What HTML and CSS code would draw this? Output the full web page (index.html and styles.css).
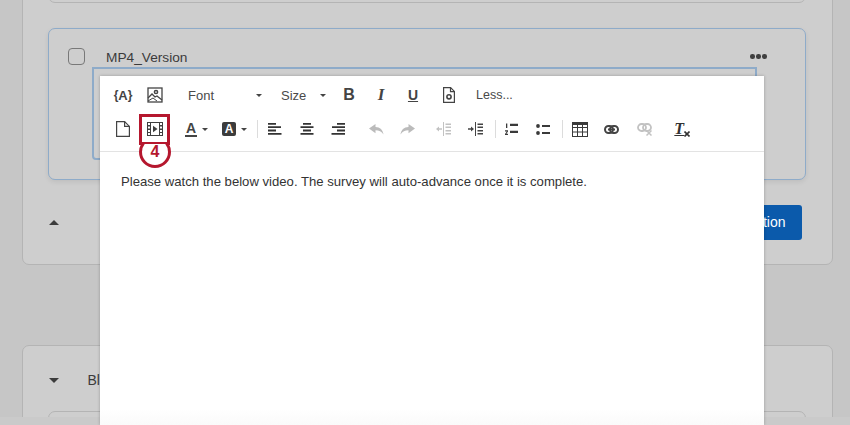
FILE: index.html
```html
<!DOCTYPE html>
<html lang="en">
<head>
<meta charset="utf-8">
<title>Question editor</title>
<link rel="stylesheet" href="styles.css">
</head>
<body>
<main class="page">
  <section class="block block-open">
    <div class="question question-prev"></div>
    <div class="question question-active">
      <div class="q-head">
        <span class="checkbox"></span>
        <span class="q-name">MP4_Version</span>
        <span class="dots"><i></i><i></i><i></i></span>
      </div>
      <div class="q-editbox"></div>
    </div>
    <div class="block-foot">
      <span class="tri tri-up"></span>
      <button class="add-btn">Add Question</button>
    </div>
  </section>
  <section class="block block-next">
    <div class="block-title"><span class="tri tri-down"></span><span class="block-name">Block</span></div>
    <div class="question question-next"></div>
  </section>
</main>
<div class="bottom-strip"></div>

<div class="modal">
  <div class="toolbar">
    <div class="tb-row">
      <span class="tb piped">{<b class="piped-a">A</b>}</span>
      <span class="tb"><svg width="16" height="16" viewBox="0 0 16 16" fill="none" stroke="#444" stroke-width="1.3"><rect x="1" y="1" width="14" height="14"/><circle cx="9" cy="5" r="1.6" stroke-width="1.5"/><path d="M1 11l4-4 3 3 2-1 5 4"/><path d="M1 14l5-3 4 3" stroke-width="1"/></svg></span>
      <span class="drop drop-font"><span class="drop-label">Font</span><span class="caret"></span></span>
      <span class="drop drop-size"><span class="drop-label">Size</span><span class="caret"></span></span>
      <span class="tb tb-text tb-bold">B</span>
      <span class="tb tb-text tb-italic">I</span>
      <span class="tb tb-text tb-under">U</span>
      <span class="tb tb-gap"><svg width="12" height="16" viewBox="0 0 12 16" fill="none" stroke="#444" stroke-width="1.2"><path d="M.6.6h7l3.8 3.8v11H.6z"/><path d="M7.5.6v4h3.9"/><circle cx="6" cy="9.8" r="2.1" stroke-width="1.6"/></svg></span>
      <span class="less">Less...</span>
    </div>
    <div class="tb-row tb-row-dense">
      <span class="tb"><svg width="14" height="16" viewBox="0 0 14 16" fill="none" stroke="#444" stroke-width="1.2"><path d="M.6.6h8l4.800 4.800v10H.6z"/><path d="M8.600.6v4.800h4.800"/></svg></span>
      <span class="tb"><svg width="16" height="14" viewBox="0 0 16 14"><path fill="#3f3f3f" fill-rule="evenodd" d="M0 0h16v14H0zM1 1v2h2V1zM13 1v2h2V1zM1 4.500v2h2v-2zM13 4.500v2h2v-2zM1 8v2h2V8zM13 8v2h2V8zM1 11v2h2v-2zM13 11v2h2v-2zM4 1v12h8V1z"/><path fill="#3f3f3f" d="M6 3.800L10.500 7 6 10.200z"/></svg></span>
      <span class="color-btn color-fore"><span class="fore-a">A</span><span class="caret"></span></span>
      <span class="color-btn color-back"><span class="back-a">A</span><span class="caret"></span></span>
      <span class="sep sep-a"></span>
      <span class="tb"><svg width="14" height="12" viewBox="0 0 14 12" fill="#333"><path d="M0 0h8v1.800H0zM0 3.300h13v1.800H0zM0 6.600h8v1.800H0zM0 9.900h13.500v1.800H0z"/></svg></span>
      <span class="tb"><svg width="14" height="12" viewBox="0 0 14 12" fill="#333"><path d="M3 0h8v1.800H3zM.5 3.300h13v1.800H.5zM3 6.600h8v1.800H3zM.5 9.900h13v1.800H.5z"/></svg></span>
      <span class="tb"><svg width="14" height="12" viewBox="0 0 14 12" fill="#333"><path d="M6 0h8v1.800H6zM1 3.300h13v1.800H1zM6 6.600h8v1.800H6zM.5 9.900h13.500v1.800H.5z"/></svg></span>
      <span class="tb tb-undo"><svg width="15" height="11" viewBox="0 0 15 11" fill="#bbb"><path d="M6.500 0L0 4.600l6.500 4.600V6.200c3.600 0 6 1 8 4.300C14 6 11 3 6.500 3z"/></svg></span>
      <span class="tb"><svg width="15" height="11" viewBox="0 0 15 11" fill="#bbb"><path d="M8.500 0L15 4.600l-6.500 4.600V6.200c-3.600 0-6 1-8 4.300C1 6 4 3 8.500 3z"/></svg></span>
      <span class="tb tb-out"><svg width="15" height="14" viewBox="0 0 15 14" fill="#c2c2c2"><path d="M7 0h1v14H7zM9.500 1.500H15V3H9.500zM9.500 4.500H15V6H9.500zM9.500 8H15v1.500H9.500zM9.500 11H15v1.500H9.500zM6 6.300H3V4.500L0 7l3 2.500V7.700h3z"/></svg></span>
      <span class="tb"><svg width="15" height="14" viewBox="0 0 15 14" fill="#444"><path d="M7 0h1v14H7zM9.500 1.500H15V3H9.500zM9.500 4.500H15V6H9.500zM9.500 8H15v1.500H9.500zM9.500 11H15v1.500H9.500zM0 6.300h3V4.500L6 7 3 9.500V7.700H0z"/></svg></span>
      <span class="sep sep-b"></span>
      <span class="tb"><svg width="13" height="13" viewBox="0 0 13 13" fill="#3a3a3a"><path d="M5 .8h8v2.200H5zM5 7.800h8V10H5zM1 .5h1.300V5H1zM0 7.300h3v1.200L1.400 10.800H3V12H0v-1l1.800-2.500H0z"/></svg></span>
      <span class="tb"><svg width="14" height="11" viewBox="0 0 14 11" fill="#3a3a3a"><circle cx="2" cy="2" r="1.900"/><circle cx="2" cy="9" r="1.900"/><path d="M6 1h8v2H6zM6 8h8v2H6z"/></svg></span>
      <span class="sep sep-c"></span>
      <span class="tb"><svg width="16" height="15" viewBox="0 0 16 15" fill="none" stroke="#3a3a3a"><rect x=".5" y=".5" width="15" height="14"/><path d="M0 1.500h16" stroke-width="3"/><path d="M0 5.500h16M0 10h16M5.500 3v12M10.500 3v12"/></svg></span>
      <span class="tb"><svg width="15" height="9" viewBox="0 0 15 9" fill="none" stroke="#444" stroke-width="2"><rect x="1" y="1" width="8" height="7" rx="3.500"/><rect x="6" y="1" width="8" height="7" rx="3.500"/><path d="M4 4.500h7"/></svg></span>
      <span class="tb tb-unlink"><svg width="15" height="13" viewBox="0 0 15 13" fill="none" stroke="#c2c2c2" stroke-width="1.800"><rect x="1" y="1" width="8" height="7" rx="3.500"/><rect x="6" y="1" width="8" height="7" rx="3.500"/><path d="M9.500 7.500l5 5M14.500 7.500l-5 5" stroke-width="1.500"/></svg></span>
      <span class="tb tb-clear"><span class="clear-t">T</span><svg class="clear-x" width="6" height="6" viewBox="0 0 6 6" stroke="#333" stroke-width="1.600"><path d="M.5.500l5 5M5.500.500l-5 5"/></svg></span>
    </div>
  </div>
  <div class="editor-body">
    <p class="editor-text">Please watch the below video. The survey will auto-advance once it is complete.</p>
  </div>
  <div class="modal-fade"></div>
</div>

<div class="callout-box"></div>
<div class="callout-badge">4</div>
</body>
</html>
```

FILE: styles.css
```css
* { box-sizing: border-box; }
html, body { margin: 0; height: 425px; overflow: hidden; }
body {
  background: #c6c6c6;
  font-family: "Liberation Sans", Arial, sans-serif;
  color: #3b3b3b;
  position: relative;
}
.page {
  display: flex;
  flex-direction: column;
  gap: 80px;
  padding: 0 17px 0 22px;
  margin-top: -20px;
}
.block {
  background: #cecece;
  border: 1.5px solid #b4b4b4;
  border-radius: 7px;
  padding: 0 26.5px 0 24.5px;
  flex: none;
}
.block-open { height: 285px; }
.block-next { height: 120px; }
.question {
  background: #cecece;
  border: 1.5px solid #b4b4b4;
  border-radius: 7px;
}
.question-prev { height: 24px; margin-top: -2px; }
.question-active {
  height: 152px;
  margin-top: 24.5px;
  border: 1.5px solid #8eabc9;
  box-shadow: 0 2px 5px rgba(0, 0, 0, .08);
  padding: 0 48px 0 43px;
}
.q-head {
  display: flex;
  align-items: center;
  height: 38px;
  padding-top: 18px;
  margin-left: -24px;
  margin-right: -10px;
}
.checkbox {
  width: 17px;
  height: 17px;
  border: 1.5px solid #787878;
  border-radius: 4px;
  flex: none;
}
.q-name { margin: 1px 0 0 21.5px; font-size: 13.7px; }
.dots { margin-left: auto; display: flex; gap: 1.5px; }
.dots i { width: 4.5px; height: 4.5px; border-radius: 50%; background: #3f3f3f; }
.q-editbox {
  height: 93px;
  border: 2px solid #8eabc9;
  border-radius: 0 0 4px 4px;
}
.block-foot {
  display: flex;
  align-items: center;
  justify-content: space-between;
  margin-top: 25px;
  height: 35px;
  margin-right: 4px;
}
.tri {
  width: 0;
  height: 0;
  border-left: 5px solid transparent;
  border-right: 5px solid transparent;
  flex: none;
  margin-left: 1px;
}
.tri-up { border-bottom: 5px solid #3c3c3c; }
.tri-down { border-top: 5px solid #3c3c3c; }
.add-btn {
  background: #0b5aab;
  color: #fff;
  border: 0;
  border-radius: 3px;
  height: 35px;
  width: 130px;
  font: 14px "Liberation Sans", Arial, sans-serif;
  text-align: right;
  padding: 0 16px 0 0;
}
.block-title {
  display: flex;
  align-items: center;
  height: 65px;
  padding-top: 3px;
}
.block-name { margin-left: 29px; font-size: 14px; }
.question-next { height: 40px; }

.bottom-strip {
  position: absolute;
  left: 0;
  right: 0;
  top: 417px;
  height: 8px;
  background: #cacaca;
}

.modal {
  position: absolute;
  left: 100px;
  top: 76px;
  width: 664px;
  height: 349px;
  background: #fff;
  box-shadow: 0 0 3px rgba(0, 0, 0, .25);
}
.toolbar {
  height: 76px;
  border-bottom: 1.5px solid #e3e3e3;
  padding: 2px 0 0 7px;
  display: flex;
  flex-direction: column;
}
.tb-row { display: flex; align-items: center; height: 34px; }
.tb {
  width: 32px;
  height: 30px;
  display: flex;
  align-items: center;
  justify-content: center;
  flex: none;
  position: relative;
}
.tb-row-dense .tb { width: 31.7px; }
.tb-row-dense .tb:first-child, .tb-row-dense .tb:nth-child(2) { width: 32px; }
.piped { font-size: 12px; font-weight: 700; color: #444; }
.piped-a { font-size: 13px; }
.drop {
  display: flex;
  align-items: center;
  height: 30px;
  font-size: 13px;
  color: #4a4a4a;
  flex: none;
}
.drop-font { width: 99px; padding-left: 17px; }
.drop-font .caret { margin-left: auto; margin-right: 8px; }
.drop-size { width: 63px; padding-left: 11px; }
.drop-size .caret { margin-left: auto; margin-right: 7px; }
.caret {
  width: 0;
  height: 0;
  border-left: 3px solid transparent;
  border-right: 3px solid transparent;
  border-top: 3px solid #444;
  flex: none;
}
.tb-text { color: #444; font-size: 16px; }
.tb-bold { font-weight: 700; }
.tb-italic { font-style: italic; font-weight: 700; font-family: "Liberation Serif", serif; font-size: 17px; }
.tb-under { font-weight: 700; font-size: 14px; text-decoration: underline; }
.tb-gap { margin-left: 4px; }
.less { margin-left: 11px; font-size: 12.5px; color: #4a4a4a; }
.color-btn { display: flex; align-items: center; height: 30px; flex: none; }
.color-fore { margin-left: 14px; }
.fore-a {
  font-size: 14px;
  font-weight: 700;
  color: #444;
  border-bottom: 2px solid #444;
  line-height: 14px;
  padding: 0 1px;
}
.color-fore .caret { margin-left: 5px; }
.color-back { margin-left: 14px; }
.back-a {
  width: 14px;
  height: 14px;
  background: #3c3c3c;
  color: #fff;
  border-radius: 2px;
  font-size: 12px;
  font-weight: 700;
  display: flex;
  align-items: center;
  justify-content: center;
}
.color-back .caret { margin-left: 5px; }
.sep { width: 1px; height: 18px; background: #dcdcdc; flex: none; }
.sep-a { margin-left: 10px; margin-right: 1px; }
.tb-undo { margin-left: 6px; }
.tb-out { margin-left: 4px; }
.sep-b { margin-left: 4px; }
.sep-c { margin-left: 3px; margin-right: 1px; }
.tb-unlink { margin-left: 1px; }
.tb-clear { margin-left: 5px; }
.clear-t {
  font-family: "Liberation Serif", serif;
  font-size: 16px;
  font-weight: 700;
  font-style: italic;
  color: #333;
  text-decoration: underline;
  margin-right: 4px;
}
.clear-x { position: absolute; left: 19px; top: 17px; }
.editor-body { padding: 22px 21px; }
.editor-text { margin: 0; font-size: 13.13px; line-height: 16px; color: #333; }
.modal-fade {
  position: absolute;
  left: 0;
  right: 0;
  bottom: 0;
  height: 16px;
  background: linear-gradient(#fff, #fafafa);
}

.callout-box {
  position: absolute;
  left: 139px;
  top: 114px;
  width: 31px;
  height: 31px;
  border: 3px solid #b5172e;
}
.callout-badge {
  position: absolute;
  left: 139px;
  top: 136px;
  width: 32px;
  height: 32px;
  border: 3px solid #b5172e;
  border-radius: 50%;
  background: #fff;
  color: #b5172e;
  font-size: 16px;
  font-weight: 700;
  display: flex;
  align-items: center;
  justify-content: center;
  clip-path: inset(8px 0 0 0);
}
```
